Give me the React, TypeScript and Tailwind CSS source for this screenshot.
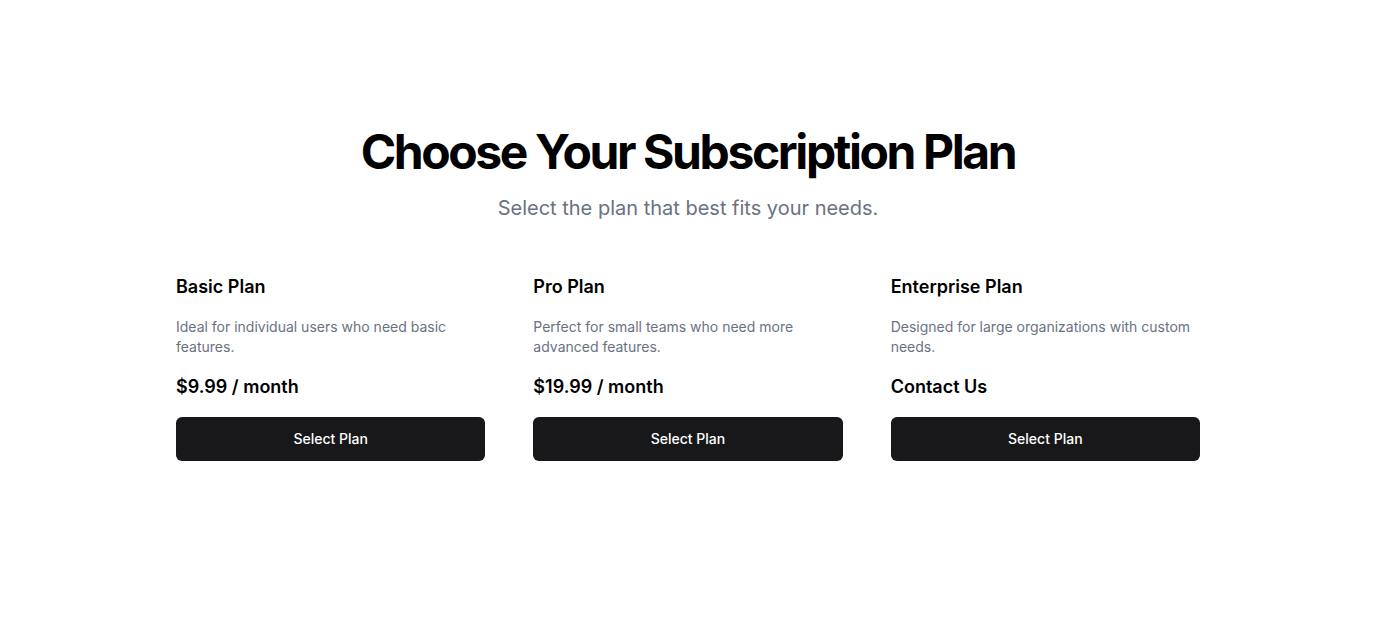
import React from 'react';

interface Plan {
  name: string;
  description: string;
  price: string;
}

const plans: Plan[] = [
  { name: 'Basic Plan', description: 'Ideal for individual users who need basic features.', price: '$9.99 / month' },
  { name: 'Pro Plan', description: 'Perfect for small teams who need more advanced features.', price: '$19.99 / month' },
  { name: 'Enterprise Plan', description: 'Designed for large organizations with custom needs.', price: 'Contact Us' },
];

const App: React.FC = () => {
  return (
    <div className="min-h-screen bg-white font-['Inter',sans-serif] text-black">
      <div className="mx-auto max-w-5xl pt-32">
        {/* Header */}
        <div className="text-center">
          <h1 className="text-5xl leading-[48px] font-bold tracking-tighter">Choose Your Subscription Plan</h1>
          <p className="mt-[18px] text-xl text-gray-500">Select the plan that best fits your needs.</p>
        </div>

        {/* Plans */}
        <div className="mt-[51px] grid grid-cols-3 gap-12">
          {plans.map((plan) => (
            <div key={plan.name} className="flex flex-col">
              <h3 className="text-lg font-semibold">{plan.name}</h3>
              <p className="mt-4 text-sm text-gray-500">{plan.description}</p>
              <p className="mt-4 text-lg font-semibold">{plan.price}</p>
              <button className="mt-4 h-11 w-full rounded-md bg-zinc-900 text-sm font-medium text-white">
                Select Plan
              </button>
            </div>
          ))}
        </div>
      </div>
    </div>
  );
};

export default App;
